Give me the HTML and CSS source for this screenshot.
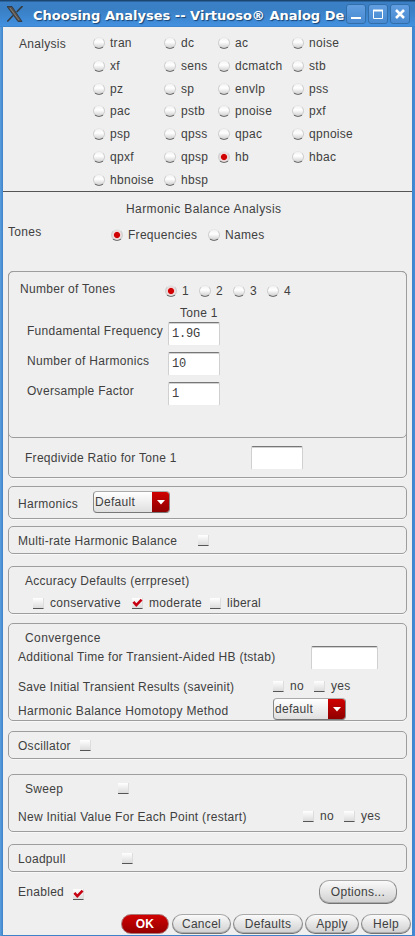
FILE: index.html
```html
<!DOCTYPE html>
<html lang="en">
<head>
<meta charset="utf-8">
<title>Choosing Analyses</title>
<link rel="stylesheet" href="styles.css">
</head>
<body>
<div class="window">
  <header class="titlebar">
    <svg class="logo" width="16" height="16" viewBox="0 0 16 16"><path d="M0 .5h5l10 15h-4z" fill="#55504b" stroke="#292d31" stroke-width=".7"/><path d="M15.5 0 9.7 6M6 9.5.3 15.5" stroke="#383b3e" stroke-width="1.6"/><path d="m3 2 9 12" stroke="#969087" stroke-width=".7"/></svg>
    <h1>Choosing Analyses -- Virtuoso® Analog De</h1>
    <button class="win"><svg width="20" height="20" viewBox="0 0 20 20"><path d="M5 14h10" stroke="#fff" stroke-width="2"/></svg></button>
    <button class="win"><svg width="20" height="20" viewBox="0 0 20 20"><path d="M5.5 7v7.5h9V6" fill="none" stroke="#fff"/><path d="M5 6.5h10" stroke="#fff" stroke-width="2"/></svg></button>
    <button class="win"><svg width="20" height="20" viewBox="0 0 20 20"><path d="m6 6 8 8m0-8-8 8" stroke="#fff" stroke-width="2.5"/></svg></button>
  </header>
  <main>
    <section class="analysis">
      <span class="caption">Analysis</span>
      <div class="choices">
        <label><i class="radio"></i>tran</label><label><i class="radio"></i>dc</label><label><i class="radio"></i>ac</label><label><i class="radio"></i>noise</label>
        <label><i class="radio"></i>xf</label><label><i class="radio"></i>sens</label><label><i class="radio"></i>dcmatch</label><label><i class="radio"></i>stb</label>
        <label><i class="radio"></i>pz</label><label><i class="radio"></i>sp</label><label><i class="radio"></i>envlp</label><label><i class="radio"></i>pss</label>
        <label><i class="radio"></i>pac</label><label><i class="radio"></i>pstb</label><label><i class="radio"></i>pnoise</label><label><i class="radio"></i>pxf</label>
        <label><i class="radio"></i>psp</label><label><i class="radio"></i>qpss</label><label><i class="radio"></i>qpac</label><label><i class="radio"></i>qpnoise</label>
        <label><i class="radio"></i>qpxf</label><label><i class="radio"></i>qpsp</label><label><i class="radio on"></i>hb</label><label><i class="radio"></i>hbac</label>
        <label><i class="radio"></i>hbnoise</label><label><i class="radio"></i>hbsp</label>
      </div>
    </section>
    <h2>Harmonic Balance Analysis</h2>
    <div class="tones">
      <span>Tones</span>
      <label><i class="radio on"></i>Frequencies</label><label><i class="radio"></i>Names</label>
    </div>

    <section class="group tone-group">
      <div class="tone-panel">
        <div class="tone-count">
          <span>Number of Tones</span>
          <label><i class="radio on"></i>1</label><label><i class="radio"></i>2</label><label><i class="radio"></i>3</label><label><i class="radio"></i>4</label>
        </div>
        <div class="tone-head">Tone 1</div>
        <div class="field"><span>Fundamental Frequency</span><div class="input">1.9G</div></div>
        <div class="field"><span>Number of Harmonics</span><div class="input">10</div></div>
        <div class="field"><span>Oversample Factor</span><div class="input">1</div></div>
      </div>
      <div class="ratio"><span>Freqdivide Ratio for Tone 1</span><div class="input"></div></div>
    </section>

    <section class="group harmonics">
      <span>Harmonics</span>
      <div class="combo"><span>Default</span><b><svg width="8" height="5" viewBox="0 0 8 5"><path d="M0 0h8L4 4.5z" fill="#fff"/></svg></b></div>
    </section>

    <section class="group multirate"><span>Multi-rate Harmonic Balance</span><i class="check"></i></section>

    <section class="group accuracy">
      <h3>Accuracy Defaults (errpreset)</h3>
      <div class="presets">
        <label><i class="check"></i>conservative</label>
        <label><i class="check"><svg width="11" height="10" viewBox="0 0 11 10"><path d="m1.4 3.9 2.9 3.2L9.6 1.7" fill="none" stroke="#c60010" stroke-width="2.6"/></svg></i>moderate</label>
        <label><i class="check"></i>liberal</label>
      </div>
    </section>

    <section class="group convergence">
      <h3>Convergence</h3>
      <div class="tstab"><span>Additional Time for Transient-Aided HB (tstab)</span><div class="input"></div></div>
      <div class="saveinit"><span>Save Initial Transient Results (saveinit)</span><label><i class="check"></i>no</label><label><i class="check"></i>yes</label></div>
      <div class="method"><span>Harmonic Balance Homotopy Method</span><div class="combo"><span>default</span><b><svg width="8" height="5" viewBox="0 0 8 5"><path d="M0 0h8L4 4.5z" fill="#fff"/></svg></b></div></div>
    </section>

    <section class="group oscillator"><span>Oscillator</span><i class="check"></i></section>

    <section class="group sweep">
      <div class="sweep-row"><span>Sweep</span><i class="check"></i></div>
      <div class="restart"><span>New Initial Value For Each Point (restart)</span><label><i class="check"></i>no</label><label><i class="check"></i>yes</label></div>
    </section>

    <section class="group loadpull"><span>Loadpull</span><i class="check"></i></section>

    <div class="enabled">
      <span>Enabled</span>
      <i class="check"><svg width="11" height="10" viewBox="0 0 11 10"><path d="m1.4 3.9 2.9 3.2L9.6 1.7" fill="none" stroke="#c60010" stroke-width="2.6"/></svg></i>
      <button class="push options">Options...</button>
    </div>
    <footer>
      <button class="push ok">OK</button><button class="push cancel">Cancel</button><button class="push defaults">Defaults</button><button class="push apply">Apply</button><button class="push help">Help</button>
    </footer>
  </main>
</div>
</body>
</html>
```
FILE: styles.css
```css
* { box-sizing: border-box; }
body, h1, h2, h3 { margin: 0; font-size: inherit; font-weight: normal; }
body {
  width: 415px; height: 936px; overflow: hidden;
  font: 12px/14px "Liberation Sans", Arial, sans-serif;
  letter-spacing: .29px; color: #404040; white-space: nowrap;
}
button { font: inherit; letter-spacing: inherit; color: inherit; padding: 0; }
svg { display: block; }

.window {
  width: 415px; height: 936px; padding: 0 3px 1px;
  background: linear-gradient(90deg, #5c9fdf 0, #3e83ca 3px, #3e83ca 412px, #438dda);
}
.titlebar {
  height: 27px; margin: 0 -3px; padding: 4px 5px 0 7px;
  display: flex; gap: 2px;
  background: linear-gradient(#1b4671 0, #1b4671 1px, #3b80c6 2px, #397fc4 9px, #4290df 26px, #3a7dbe);
}
.logo { margin: 2px 8px 0 0; flex: none; }
.titlebar h1 {
  width: 310px; margin-right: 1px; flex: none;
  font: bold 13px/23px "DejaVu Sans", sans-serif; letter-spacing: 0;
  color: #fff; text-shadow: 1px 1px 1px #174272;
}
.win {
  width: 20px; height: 20px; flex: none; border: 1px solid #326faa; border-radius: 3px;
  background: linear-gradient(#609ee0, #4889d0);
}
.win svg { margin: -1px; }
main { height: 908px; background: #efefef; overflow: hidden; }

.analysis { display: flex; height: 165px; padding: 5px 0 0 16px; border-bottom: 1px solid #555; }
.caption { width: 74px; padding-top: 5px; }
.choices { display: grid; grid-template-columns: 71px 54px 74px 80px; grid-template-rows: 23px 23px 23px 22.5px 22.5px 23px 23px; align-content: start; margin-top: -1px; }
label { display: flex; align-items: center; }
.radio {
  width: 12px; height: 12px; flex: none; margin-right: 5px; border-radius: 50%;
  background: linear-gradient(#f3f3f3, #fff 40%, #cfcfcf);
  border: 1px solid; border-color: #e6e6e6 #cecece #707070;
}
.radio.on { background: radial-gradient(circle, #d00000 0 2.6px, #f3dada 3.6px, #ddd 5px); }
.check {
  width: 11px; height: 11px; flex: none; margin-right: 6px;
  background: linear-gradient(#fff, #dcdcdc);
  border-bottom: 1px solid #555; border-right: 1px solid #ddd;
}
h2 { height: 14px; margin: 10px 0 0 123px; letter-spacing: .4px; }
.tones { display: flex; height: 34px; padding: 7px 0 0 5px; }
.tones span { width: 103px; padding-top: 2px; }
.tones label { height: 24px; width: 97px; }

.group { width: 399px; margin-left: 5px; border: 1px solid #9d9d9d; border-radius: 5px; box-shadow: 0 1px #f8f8f8; }
.group > span { line-height: 14px; }
.input {
  width: 52px; height: 24px; flex: none; padding: 4px 3px 0; border-radius: 2px;
  background: #fff; border: 1px solid; border-color: #777 #d0d0d0 #eee;
  box-shadow: inset 0 1px #d1d1d1;
  font: 12px/14px "Liberation Mono", monospace; letter-spacing: -.2px;
}
.tone-group { height: 207px; margin-top: 21px; }
.tone-panel { height: 167px; margin: -1px; padding: 10px 0 0 11px; border: 1px solid #9d9d9d; border-radius: 5px; }
.tone-count { display: flex; height: 23px; }
.tone-count span { width: 145px; }
.tone-count label { width: 34px; height: 17px; }
.tone-head { margin-left: 160px; height: 17px; padding-top: 1px; }
.field { display: flex; height: 30px; margin-left: 7px; }
.field span { width: 141px; padding-top: 2px; }
.ratio { display: flex; margin: 9px 0 0 16px; }
.ratio span { width: 226px; padding-top: 5px; }

.harmonics { display: flex; height: 33px; margin-top: 8px; padding: 4px 0 0 9px; }
.harmonics > span { width: 75px; padding-top: 6px; }
.combo {
  width: 77px; height: 22px; display: flex; overflow: hidden; border-radius: 4px;
  border: 1px solid; border-color: #aaa #888 #777;
  background: linear-gradient(#fff, #dfdfdf);
}
.combo span { flex: 1; padding: 3px 0 0 1px; }
.combo b { width: 17px; height: 20px; display: flex; align-items: center; justify-content: center; background: linear-gradient(#d00000, #8f0000); }
.multirate { display: flex; height: 28px; margin-top: 7px; padding: 7px 0 0 9px; }
.multirate span { width: 180px; }
.multirate .check { margin-top: 1px; }
.accuracy { height: 48px; margin-top: 12px; padding-top: 7px; }
h3 { height: 14px; margin-left: 16px; }
.presets { display: flex; padding: 8px 0 0 24px; }
.presets label:nth-child(1) { width: 99px; }
.presets label:nth-child(2) { width: 78px; }

.convergence { height: 98px; margin-top: 9px; padding: 7px 0 0 9px; }
.convergence h3 { margin-left: 7px; letter-spacing: .4px; }
.tstab { display: flex; height: 34px; padding-top: 1px; }
.tstab span { width: 293px; padding-top: 4px; }
.tstab .input { width: 67px; }
.saveinit { display: flex; height: 19px; }
.saveinit span { width: 255px; padding-top: 1px; letter-spacing: .23px; }
.saveinit label, .restart label { height: 14px; width: 41px; }
.method { display: flex; }
.method > span { width: 255px; padding-top: 6px; letter-spacing: .35px; }
.method .combo { width: 73px; }
.oscillator { display: flex; height: 28px; margin-top: 10px; padding: 7px 0 0 9px; }
.oscillator span { width: 62px; }
.oscillator .check, .loadpull .check { margin-top: 1px; }
.sweep { height: 58px; margin-top: 15px; padding: 7px 0 0 9px; }
.sweep-row { display: flex; height: 27px; padding-left: 7px; }
.sweep-row span { width: 93px; }
.sweep-row .check { margin-top: 1px; }
.restart { display: flex; }
.restart span { width: 285px; padding-top: 1px; }
.loadpull { display: flex; height: 28px; margin-top: 12px; padding: 7px 0 0 9px; }
.loadpull span { width: 104px; }
.enabled { display: flex; height: 42px; padding: 8px 0 0 15px; }
.enabled span { width: 55px; padding-top: 5px; }
.enabled .check { margin: 9px 235px 0 0; }
.push {
  height: 20px; flex: none; border: 1px solid; border-color: #aaa #888 #747474; border-radius: 10px;
  background: linear-gradient(#fafafa, #d0d0d0); box-shadow: inset 0 -1px #aaa;
}
.options { width: 78px; height: 24px; }
footer { display: flex; gap: 2px; padding-left: 118px; }
.ok { width: 48px; margin-right: 1px; color: #fff; font-weight: bold; background: linear-gradient(#d00000, #960000); box-shadow: none; border-color: #a77; }
.cancel { width: 59px; }
.defaults { width: 70px; }
.apply { width: 54px; }
.help { width: 50px; }
```
